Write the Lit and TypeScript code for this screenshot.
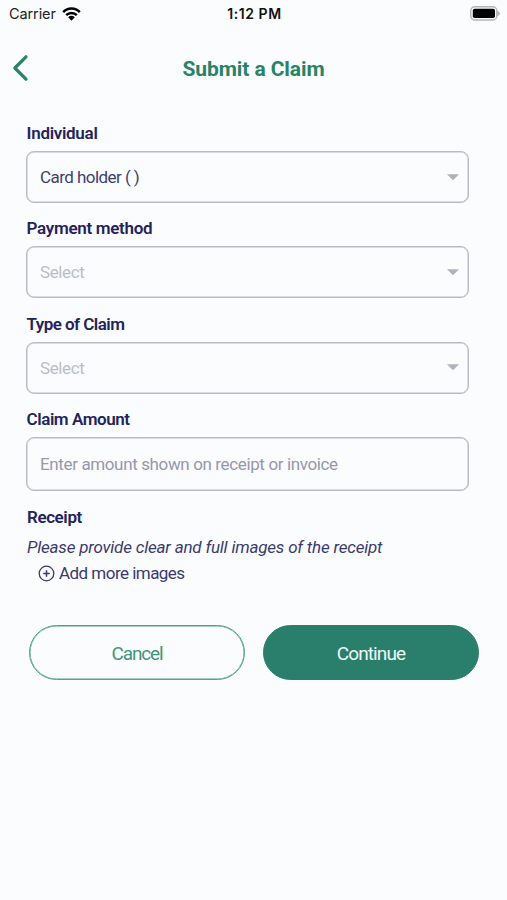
import { LitElement, html, css, svg } from "lit";
import { customElement, property } from "lit/decorators.js";
import { styleMap } from "lit/directives/style-map.js";

@customElement("status-bar")
class StatusBar extends LitElement {
  static styles = css`
    :host { display: grid; grid-template-columns: 1fr auto 1fr; align-items: center; height: 28px; padding: 0 7px 0 9px;
      font: 400 14.5px/20px Inter, "Liberation Sans", sans-serif; color: #222; box-sizing: border-box; }
    .left { display: flex; align-items: center; gap: 6px; letter-spacing: -0.1px; }
    .time { font-weight: 600; font-size: 14px; letter-spacing: 0.55px; color: #111; }
    .battery { justify-self: end; display: block; margin-top: -2px; }
    .wifi { margin-top: -1px; }
    svg { display: block; }
  `;
  render() {
    return html`
      <div class="left"><span>Carrier</span>
        <svg class="wifi" width="19" height="14" viewBox="0 0 19 14" fill="none" stroke="#000" stroke-width="2.5">
          <path d="M1.2 5.1C5.8 .4 13.2 .4 17.8 5.1M4.2 8.2C7.2 5.2 11.8 5.2 14.8 8.2" />
          <path d="M6.2 10.2C8.1 8.4 10.9 8.4 12.8 10.2L9.5 13.7Z" fill="#000" stroke="none" />
        </svg>
      </div>
      <span class="time">1:12 PM</span>
      <svg class="battery" width="30" height="15" viewBox="0 0 30 15">
        <path d="M27 4.8C31 6 31 9 27 10.2Z" fill="#b8b8b9" />
        <rect x=".8" y=".8" width="26" height="13.2" rx="4" fill="#fafcfd" stroke="#b4b4b5" stroke-width="1.4" />
        <rect x="2.8" y="2.8" width="22.2" height="9.2" rx="1.8" fill="#000" />
      </svg>`;
  }
}

@customElement("form-field")
class FormField extends LitElement {
  @property() label = "";
  @property() text = "";
  @property() kind = "select";
  @property() tone = "empty";
  @property({ type: Number }) tracking = -0.3;
  static styles = css`
    :host { display: block; }
    .label { font-weight: 600; font-size: 17px; line-height: 26px; height: 26px; padding-left: 0.6px; white-space: nowrap; }
    .box { box-sizing: border-box; height: 52px; margin-top: 5px; padding: 0 9px 0 13px; border: 1px solid #bcbcc0;
      box-shadow: inset 0 0 0 0.5px #bcbcc0;
      border-radius: 8px; display: flex; align-items: center; justify-content: space-between; font-size: 17px; white-space: nowrap; }
    .input { height: 54px; }
    .filled { color: #3f3f70; letter-spacing: -0.55px; }
    .empty { color: #bdbdc7; letter-spacing: -0.4px; }
    .hint { color: #9797ad; letter-spacing: -0.37px; }
    svg { display: block; }
  `;
  render() {
    return html`<div class="label" style=${styleMap({ letterSpacing: `${this.tracking}px` })}>${this.label}</div>
      <div class="box ${this.kind}">
        <span class=${this.tone}>${this.text}</span>
        ${this.kind === "select"
          ? html`<svg width="12" height="7" viewBox="0 0 12 7">${svg`<path d="M0 .3H12L6 6.3Z" fill="#b0b0be" />`}</svg>`
          : null}
      </div>`;
  }
}

@customElement("app-root")
class AppRoot extends LitElement {
  static styles = css`
    :host { display: block; width: 507px; height: 900px; background: #fafcfe; overflow: hidden; color: #23235b;
      font-family: Roboto, "Noto Sans", sans-serif; }
    .header { display: grid; grid-template-columns: 40px 1fr 40px; align-items: center; height: 82px; }
    .header svg { display: block; margin: -2px 0 0 12px; }
    .title { text-align: center; font-weight: 700; font-size: 21px; line-height: 28px; letter-spacing: -0.08px; color: #2a8267; white-space: nowrap; }
    .form { display: flex; flex-direction: column; padding: 10px 38px 0 26px; gap: 12.3px; }
    .receipt { padding: 13px 0 0 27px; white-space: nowrap; }
    .label { font-weight: 600; font-size: 17px; line-height: 26px; letter-spacing: -0.4px; }
    .note { font-style: italic; font-size: 17px; line-height: 26px; letter-spacing: -0.2px; margin-top: 4px; color: #3a3a6c; }
    .add { display: flex; align-items: center; gap: 4px; margin-left: 11px; font-size: 17px; line-height: 26px; letter-spacing: -0.53px; color: #3a3a6c; }
    .add svg { display: block; margin-top: 2px; }
    .actions { display: grid; grid-template-columns: 216px 216px; gap: 18px; padding: 39px 0 0 29px; }
    .button { box-sizing: border-box; height: 55px; border: 1px solid #55a088; box-shadow: inset 0 0 0 0.5px #55a088; border-radius: 28px; display: flex;
      align-items: center; justify-content: center; font-size: 19px; letter-spacing: -1.1px; padding-top: 2px; color: #42947a; }
    .primary { background: #297f6c; border-color: #297f6c; box-shadow: none; color: #edf8f5; letter-spacing: -0.9px; }
  `;
  render() {
    return html`
      <status-bar></status-bar>
      <div class="header">
        <svg width="17" height="28" viewBox="0 0 17 28" fill="none" stroke="#2a8267" stroke-width="3.2" stroke-linecap="round" stroke-linejoin="round">
          <path d="M14 2.8L2.8 14L14 25.2" />
        </svg>
        <div class="title">Submit a Claim</div>
      </div>
      <div class="form">
        <form-field label="Individual" text="Card holder ( )" tone="filled"></form-field>
        <form-field label="Payment method" text="Select"></form-field>
        <form-field label="Type of Claim" text="Select" tracking="-0.55"></form-field>
        <form-field label="Claim Amount" text="Enter amount shown on receipt or invoice" kind="input" tone="hint" tracking="-0.45"></form-field>
      </div>
      <div class="receipt">
        <div class="label">Receipt</div>
        <div class="note">Please provide clear and full images of the receipt</div>
        <div class="add">
          <svg width="17" height="17" viewBox="0 0 17 17" fill="none" stroke="#3a3a6c" stroke-width="1.3">
            <circle cx="8.5" cy="8.5" r="7.3" /><path d="M8.5 5.2V11.8M5.2 8.5H11.8" stroke-width="1.5" />
          </svg>
          <span>Add more images</span>
        </div>
      </div>
      <div class="actions">
        <div class="button">Cancel</div>
        <div class="button primary">Continue</div>
      </div>`;
  }
}
